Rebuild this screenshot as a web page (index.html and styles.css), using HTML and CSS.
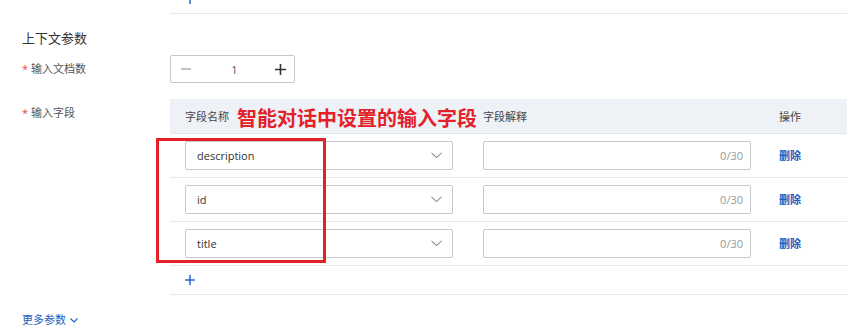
FILE: index.html
```html
<!DOCTYPE html>
<html lang="zh-CN">
<head>
    <meta charset="UTF-8">
    <meta name="viewport" content="width=device-width, initial-scale=1.0">
    <title>上下文参数</title>
    <link rel="stylesheet" href="styles.css">
</head>
<body>
<div class="page">

    <!-- tail of the previous table, scrolled mostly out of view -->
    <div class="prev-tail">
        <svg class="add-icon" width="10" height="10" viewBox="0 0 10 10"><path d="M5 0v10M0 5h10" /></svg>
    </div>

    <div class="section-title">上下文参数</div>

    <div class="form-row row-docs">
        <label class="form-label"><span class="req">*</span>输入文档数</label>
        <div class="form-control">
            <div class="num-input">
                <span class="num-btn minus">
                    <svg width="10" height="10" viewBox="0 0 10 10"><path d="M0 5h10" /></svg>
                </span>
                <span class="num-value">1</span>
                <span class="num-btn plus">
                    <svg width="11" height="11" viewBox="0 0 11 11"><path d="M5.5 0v11M0 5.5h11" /></svg>
                </span>
            </div>
        </div>
    </div>

    <div class="form-row row-fields">
        <label class="form-label"><span class="req">*</span>输入字段</label>
        <div class="form-control">
            <div class="field-table">
                <div class="t-row t-head">
                    <div class="cell">字段名称</div>
                    <div class="cell">字段解释</div>
                    <div class="cell">操作</div>
                </div>

                <div class="t-row">
                    <div class="cell">
                        <div class="select"><span>description</span>
                            <svg class="chevron" width="11" height="7" viewBox="0 0 11 7"><path d="M0.5 0.8L5.5 5.6L10.5 0.8" /></svg>
                        </div>
                    </div>
                    <div class="cell"><div class="text-input"><span class="count">0/30</span></div></div>
                    <div class="cell"><a class="del">删除</a></div>
                </div>

                <div class="t-row">
                    <div class="cell">
                        <div class="select"><span>id</span>
                            <svg class="chevron" width="11" height="7" viewBox="0 0 11 7"><path d="M0.5 0.8L5.5 5.6L10.5 0.8" /></svg>
                        </div>
                    </div>
                    <div class="cell"><div class="text-input"><span class="count">0/30</span></div></div>
                    <div class="cell"><a class="del">删除</a></div>
                </div>

                <div class="t-row">
                    <div class="cell">
                        <div class="select"><span>title</span>
                            <svg class="chevron" width="11" height="7" viewBox="0 0 11 7"><path d="M0.5 0.8L5.5 5.6L10.5 0.8" /></svg>
                        </div>
                    </div>
                    <div class="cell"><div class="text-input"><span class="count">0/30</span></div></div>
                    <div class="cell"><a class="del">删除</a></div>
                </div>

                <div class="t-add">
                    <svg class="add-icon" width="10" height="10" viewBox="0 0 10 10"><path d="M5 0v10M0 5h10" /></svg>
                </div>

                <!-- annotation drawn over the screenshot -->
                <div class="note">智能对话中设置的输入字段</div>
                <div class="note-box"></div>
            </div>
        </div>
    </div>

    <a class="more">更多参数
        <svg width="8" height="5" viewBox="0 0 8 5"><path d="M0.5 0.5L4 4L7.5 0.5" /></svg>
    </a>
</div>
</body>
</html>
```

FILE: styles.css
```css
body {
    margin: 0;
    background: #fff;
    color: #333;
    font-family: "Open Sans", "Noto Sans CJK SC", sans-serif;
    font-size: 12px;
    overflow: hidden;
}

.page {
    margin-top: -15px;
}

.prev-tail {
    margin-left: 170px;
    height: 28px;
    padding-left: 15px;
    display: flex;
    align-items: center;
    border-bottom: 1px solid #e6e8eb;
}

.add-icon path {
    stroke: #2b6bd0;
    stroke-width: 1.6;
    fill: none;
}

.section-title {
    margin-top: 14px;
    padding-left: 22px;
    font-size: 13px;
    line-height: 20px;
    color: #333;
}

.form-row {
    display: flex;
}

.row-docs {
    margin-top: 7px;
}

.row-fields {
    margin-top: 16px;
}

.form-label {
    width: 170px;
    flex-shrink: 0;
    box-sizing: border-box;
    padding-left: 22px;
    font-size: 11px;
    line-height: 28px;
    color: #555;
}

.req {
    color: #e0474c;
    margin-right: 3px;
}

.form-control {
    flex: 1;
    min-width: 0;
}

/* number input */
.num-input {
    width: 125px;
    height: 28px;
    box-sizing: border-box;
    border: 1px solid #c4c7cc;
    border-radius: 2px;
    display: flex;
    align-items: center;
}

.num-btn {
    width: 30px;
    display: flex;
    justify-content: center;
}

.num-btn.minus path {
    stroke: #999;
    stroke-width: 1.2;
}

.num-btn.plus {
    width: 28px;
}

.num-btn.plus path {
    stroke: #333;
    stroke-width: 1.6;
}

.num-value {
    flex: 1;
    text-align: center;
    font-size: 11px;
    color: #555;
    padding-left: 2px;
}

/* fields table */
.field-table {
    position: relative;
}

.t-row {
    display: grid;
    grid-template-columns: 298px 298px 1fr;
    align-items: center;
    height: 44px;
    box-sizing: border-box;
    border-bottom: 1px solid #e6e8eb;
}

.t-head {
    height: 35px;
    background: #eef1f6;
    border-bottom: 1px solid #e3e6eb;
    font-size: 11px;
    color: #444;
}

.cell {
    padding: 0 15px;
    min-width: 0;
}

.cell:last-child {
    padding-left: 13px;
}

.select,
.text-input {
    height: 29px;
    box-sizing: border-box;
    border: 1px solid #c4c7cc;
    border-radius: 2px;
    display: flex;
    align-items: center;
}

.select {
    padding: 0 10px 0 11px;
    justify-content: space-between;
    font-size: 11px;
    color: #333;
}

.chevron path {
    stroke: #8a8d92;
    stroke-width: 1.1;
    fill: none;
}

.text-input {
    justify-content: flex-end;
    padding-right: 7px;
}

.count {
    font-size: 11px;
    color: #999;
}

.del {
    color: #1f5fbf;
    font-size: 11px;
    font-weight: 600;
    cursor: pointer;
}

.t-add {
    height: 29px;
    box-sizing: border-box;
    padding-left: 15px;
    display: flex;
    align-items: center;
    border-bottom: 1px solid #e6e8eb;
}

.note {
    position: absolute;
    left: 67px;
    top: 7px;
    font-size: 20px;
    line-height: 24px;
    font-weight: bold;
    color: #e42128;
    font-family: "Noto Sans CJK SC", sans-serif;
}

.note-box {
    position: absolute;
    left: -14px;
    top: 39px;
    width: 170px;
    height: 125px;
    box-sizing: border-box;
    border: 3px solid #e42128;
}

.more {
    display: inline-flex;
    align-items: center;
    gap: 4px;
    margin-top: 15px;
    margin-left: 22px;
    font-size: 11px;
    line-height: 20px;
    color: #1f5fbf;
    cursor: pointer;
}

.more path {
    stroke: #1f5fbf;
    stroke-width: 1.1;
    fill: none;
}
```
